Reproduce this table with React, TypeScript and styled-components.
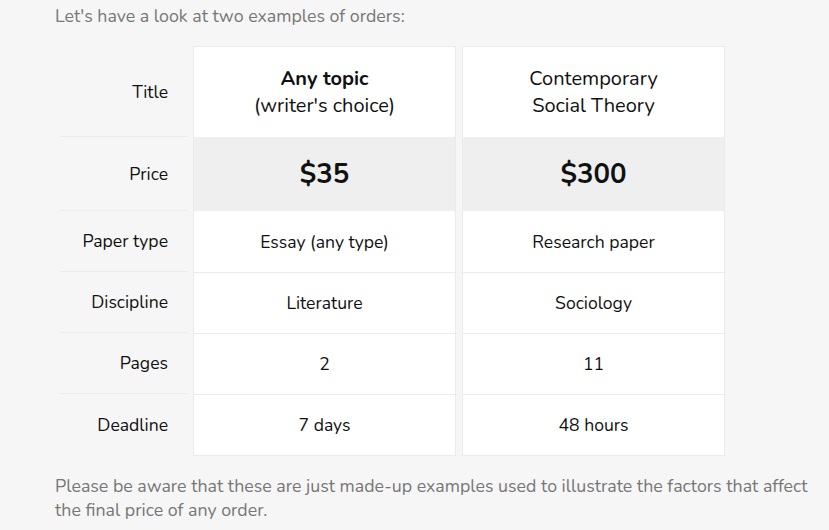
import React from "react";
import styled, { createGlobalStyle } from "styled-components";

const Global = createGlobalStyle`
  html, body { margin: 0; padding: 0; background: #f6f6f6; }
  body { font-family: "Nunito", Lato, "Noto Sans", sans-serif; }
`;

const Page = styled.div`
  width: 829px;
  height: 530px;
  box-sizing: border-box;
  padding: 4px 0 0 55px;
  background: #f6f6f6;
  overflow: hidden;
`;

const Note = styled.p`
  margin: 0;
  font-size: 17.8px;
  line-height: 24px;
  color: #777;
  width: 768px;
`;

const Table = styled.div`
  display: grid;
  grid-template-columns: 127px 263px 263px;
  column-gap: 6px;
  margin: 18px 0 18px 5px;
`;

const LabelCol = styled.div`
  display: flex;
  flex-direction: column;
  padding-top: 1px;
`;

const Label = styled.div<{ $h: number; $last?: boolean }>`
  height: ${(p) => p.$h}px;
  box-sizing: border-box;
  display: flex;
  align-items: center;
  justify-content: flex-end;
  padding-right: 19px;
  font-size: 17.6px;
  color: #111;
  border-bottom: ${(p) => (p.$last ? "none" : "1px solid #ebebeb")};
`;

const Card = styled.div`
  display: flex;
  flex-direction: column;
  background: #fff;
  border: 1px solid #ebebeb;
`;

const Cell = styled.div<{ $h: number; $price?: boolean; $line?: boolean }>`
  height: ${(p) => p.$h}px;
  box-sizing: border-box;
  display: flex;
  flex-direction: column;
  align-items: center;
  justify-content: center;
  text-align: center;
  font-size: ${(p) => (p.$price ? "27.5px" : "17.6px")};
  font-weight: ${(p) => (p.$price ? 700 : 400)};
  background: ${(p) => (p.$price ? "#efefef" : "#fff")};
  border-top: ${(p) => (p.$line ? "1px solid #ebebeb" : "none")};
  color: #111;
`;

const TitleText = styled.div`
  font-size: 20px;
  line-height: 27px;
  color: #111;
`;

const Bold = styled.span`
  font-weight: 700;
`;

const labels = ["Title", "Price", "Paper type", "Discipline", "Pages", "Deadline"];
const heights = [90, 74, 61, 61, 61, 61];

const orders = [
  {
    title: (
      <TitleText>
        <Bold>Any topic</Bold>
        <br />
        (writer's choice)
      </TitleText>
    ),
    values: ["$35", "Essay (any type)", "Literature", "2", "7 days"],
  },
  {
    title: (
      <TitleText>
        Contemporary
        <br />
        Social Theory
      </TitleText>
    ),
    values: ["$300", "Research paper", "Sociology", "11", "48 hours"],
  },
];

export default function App() {
  return (
    <Page>
      <Global />
      <Note>Let's have a look at two examples of orders:</Note>
      <Table>
        <LabelCol>
          {labels.map((l, i) => (
            <Label key={l} $h={heights[i]} $last={i === labels.length - 1}>
              {l}
            </Label>
          ))}
        </LabelCol>
        {orders.map((o, oi) => (
          <Card key={oi}>
            <Cell $h={heights[0]}>{o.title}</Cell>
            {o.values.map((v, i) => (
              <Cell key={i} $h={heights[i + 1]} $price={i === 0} $line={i >= 2}>
                {v}
              </Cell>
            ))}
          </Card>
        ))}
      </Table>
      <Note>
        Please be aware that these are just made-up examples used to illustrate the factors that affect
        the final price of any order.
      </Note>
    </Page>
  );
}
